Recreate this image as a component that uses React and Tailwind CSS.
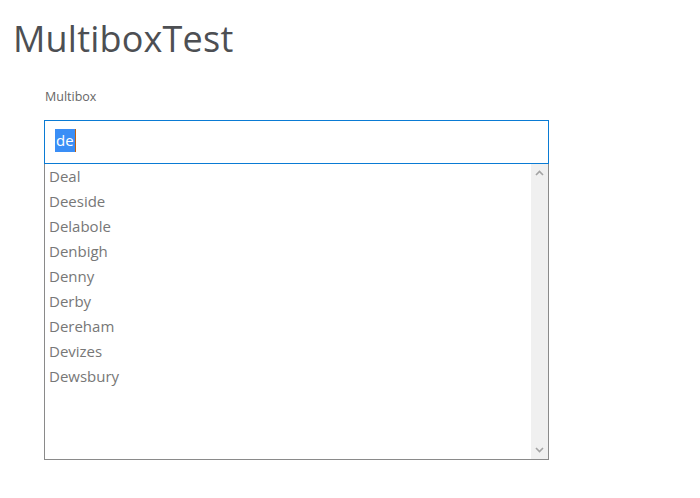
const towns = ["Deal", "Deeside", "Delabole", "Denbigh", "Denny", "Derby", "Dereham", "Devizes", "Dewsbury"];

function ChevronUp() {
  return (
    <svg width="9" height="6" viewBox="0 0 9 6" fill="none">
      <path d="M1 5 L4.5 1.5 L8 5" stroke="#a3a3a3" strokeWidth="1.6" />
    </svg>
  );
}

function ChevronDown() {
  return (
    <svg width="9" height="6" viewBox="0 0 9 6" fill="none">
      <path d="M1 1 L4.5 4.5 L8 1" stroke="#a3a3a3" strokeWidth="1.6" />
    </svg>
  );
}

export default function App() {
  return (
    <div className="w-[700px] h-[498px] bg-white font-['Open_Sans',sans-serif]">
      <h1 className="pl-[13px] pt-[15px] text-[36px] leading-[48px] text-[#4d4f53] tracking-[0.2px]">MultiboxTest</h1>
      <div className="pl-[44px] pt-[25px]">
        <div className="pl-px text-[12.5px] leading-[18px] text-[#666]">Multibox</div>
        <div className="mt-[14px] w-[505px] h-[44px] border border-[#0a7bd4] flex items-start pt-[8px] pl-[10px]">
          <span className="bg-[#3a8ef6] text-white text-[15px] leading-[23px] px-px">de</span>
          <span className="w-px h-[23px] bg-[#c06010]"></span>
        </div>
        <div className="w-[505px] h-[296px] border border-[#8a8a8a] border-t-0 flex">
          <ul className="flex-1 pl-[4px]">
            {towns.map((t) => (
              <li key={t} className="text-[15px] leading-[25px] text-[#777]">{t}</li>
            ))}
          </ul>
          <div className="w-[17px] bg-[#f0f0f0] flex flex-col justify-between items-center py-[6px]">
            <ChevronUp />
            <ChevronDown />
          </div>
        </div>
      </div>
    </div>
  );
}
